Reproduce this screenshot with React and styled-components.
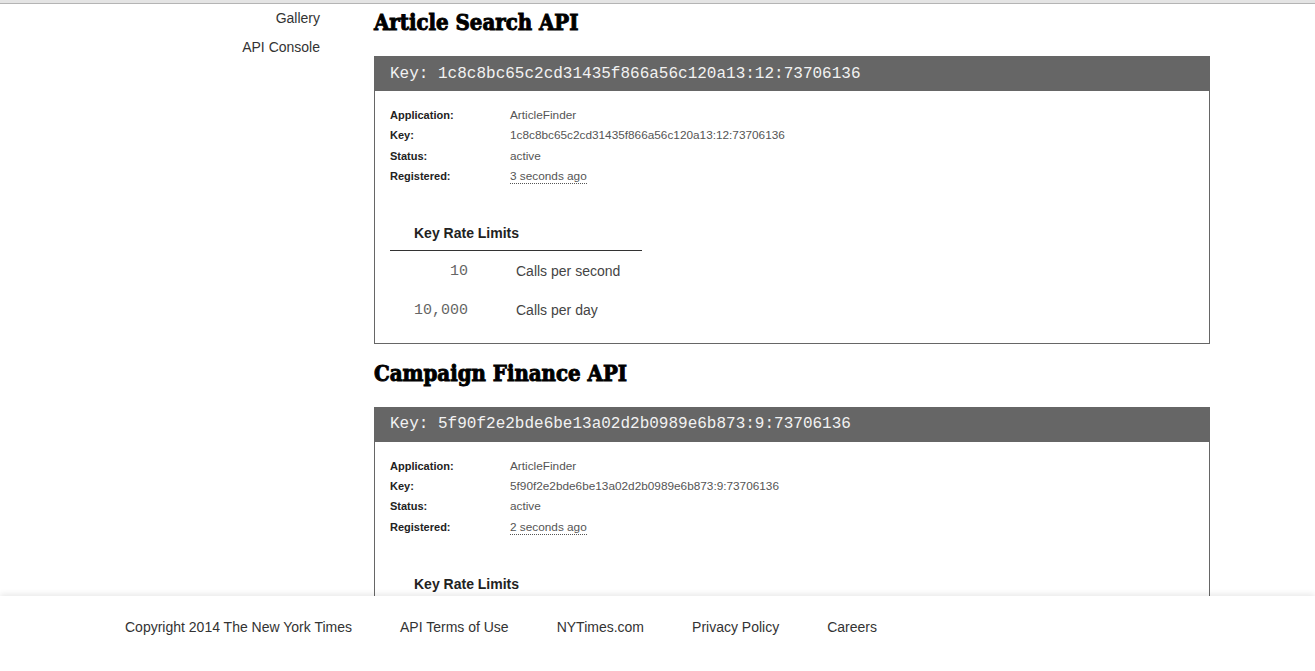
import React from "react";
import styled, { createGlobalStyle } from "styled-components";

const GlobalStyle = createGlobalStyle`
  body {
    margin: 0;
    background: #fff;
    font-family: "Liberation Sans", Arial, sans-serif;
    color: #333;
  }
`;

const Page = styled.div`
  height: 100vh;
  display: flex;
  flex-direction: column;
  overflow: hidden;
`;

const TopBar = styled.div`
  flex: none;
  height: 3px;
  background: #e4e4e4;
  border-bottom: 1px solid #b4b4b4;
`;

const Content = styled.div`
  flex: 1;
  min-height: 0;
  overflow: hidden;
  display: flex;
  align-items: flex-start;
`;

const Sidebar = styled.nav`
  width: 320px;
  flex: none;
  display: flex;
  flex-direction: column;
  align-items: flex-end;
`;

const NavLink = styled.a`
  font-size: 14px;
  line-height: 29px;
  color: #333;
  text-decoration: none;
`;

const Main = styled.main`
  width: 836px;
  margin-left: 54px;
  padding-top: 3px;
  display: flex;
  flex-direction: column;
  gap: 14px;
`;

const Section = styled.section``;

const Title = styled.h2`
  margin: 0 0 19px;
  font-family: "DejaVu Serif", serif;
  font-stretch: condensed;
  font-weight: 900;
  font-size: 22px;
  line-height: 30px;
  color: #000;
  -webkit-text-stroke: 0.9px #000;
`;

const KeyBox = styled.div`
  border: 1px solid #666;
  border-top: none;
`;

const KeyHeader = styled.div`
  background: #666;
  color: #f2f2f2;
  height: 35px;
  margin: 0 -1px;
  padding-left: 16px;
  display: flex;
  align-items: center;
  font-family: "Liberation Mono", "Courier New", monospace;
  font-size: 16px;
`;

const Body = styled.div`
  padding: 14px 15px 14px;
`;

const Details = styled.dl`
  margin: 0;
  display: grid;
  grid-template-columns: 120px 1fr;
  line-height: 20.3px;
`;

const Label = styled.dt`
  font-size: 11px;
  font-weight: bold;
  color: #222;
`;

const Value = styled.dd`
  margin: 0;
  font-size: 11.8px;
  color: #555;
`;

const Ago = styled.abbr`
  text-decoration: none;
  border-bottom: 1px dotted #555;
`;

const Limits = styled.table`
  margin-top: 29px;
  width: 252px;
  border-collapse: collapse;
`;

const LimitsHead = styled.th`
  text-align: left;
  padding: 8px 0 7px 24px;
  font-size: 14px;
  line-height: 20px;
  color: #222;
  border-bottom: 1px solid #333;
`;

const Row = styled.tr`
  height: 39px;
`;

const Num = styled.td`
  width: 78px;
  padding: 2px 0 0;
  text-align: right;
  font-family: "Liberation Mono", "Courier New", monospace;
  font-size: 15px;
  color: #666;
`;

const Desc = styled.td`
  padding: 2px 0 0 48px;
  font-size: 14px;
  color: #444;
`;

const Footer = styled.footer`
  flex: none;
  position: relative;
  z-index: 1;
  height: 75px;
  background: #fff;
  box-shadow: 0 -2px 6px rgba(0, 0, 0, 0.09);
  display: flex;
  align-items: flex-start;
  gap: 48px;
  padding: 21px 0 0 125px;
  box-sizing: border-box;
`;

const FooterLink = styled.a`
  font-size: 14px;
  line-height: 20px;
  color: #333;
  text-decoration: none;
`;

const apis = [
  {
    name: "Article Search API",
    key: "1c8c8bc65c2cd31435f866a56c120a13:12:73706136",
    ago: "3 seconds ago",
  },
  {
    name: "Campaign Finance API",
    key: "5f90f2e2bde6be13a02d2b0989e6b873:9:73706136",
    ago: "2 seconds ago",
  },
];

function ApiKey({ api }) {
  return (
    <Section>
      <Title>{api.name}</Title>
      <KeyBox>
        <KeyHeader>Key: {api.key}</KeyHeader>
        <Body>
          <Details>
            <Label>Application:</Label>
            <Value>ArticleFinder</Value>
            <Label>Key:</Label>
            <Value>{api.key}</Value>
            <Label>Status:</Label>
            <Value>active</Value>
            <Label>Registered:</Label>
            <Value>
              <Ago title="2014">{api.ago}</Ago>
            </Value>
          </Details>
          <Limits>
            <thead>
              <tr>
                <LimitsHead colSpan={2}>Key Rate Limits</LimitsHead>
              </tr>
            </thead>
            <tbody>
              <Row>
                <Num>10</Num>
                <Desc>Calls per second</Desc>
              </Row>
              <Row>
                <Num>10,000</Num>
                <Desc>Calls per day</Desc>
              </Row>
            </tbody>
          </Limits>
        </Body>
      </KeyBox>
    </Section>
  );
}

export default function App() {
  return (
    <Page>
      <GlobalStyle />
      <TopBar />
      <Content>
        <Sidebar>
          <NavLink href="#">Gallery</NavLink>
          <NavLink href="#">API Console</NavLink>
        </Sidebar>
        <Main>
          {apis.map((api) => (
            <ApiKey key={api.key} api={api} />
          ))}
        </Main>
      </Content>
      <Footer>
        <FooterLink href="#">Copyright 2014 The New York Times</FooterLink>
        <FooterLink href="#">API Terms of Use</FooterLink>
        <FooterLink href="#">NYTimes.com</FooterLink>
        <FooterLink href="#">Privacy Policy</FooterLink>
        <FooterLink href="#">Careers</FooterLink>
      </Footer>
    </Page>
  );
}
